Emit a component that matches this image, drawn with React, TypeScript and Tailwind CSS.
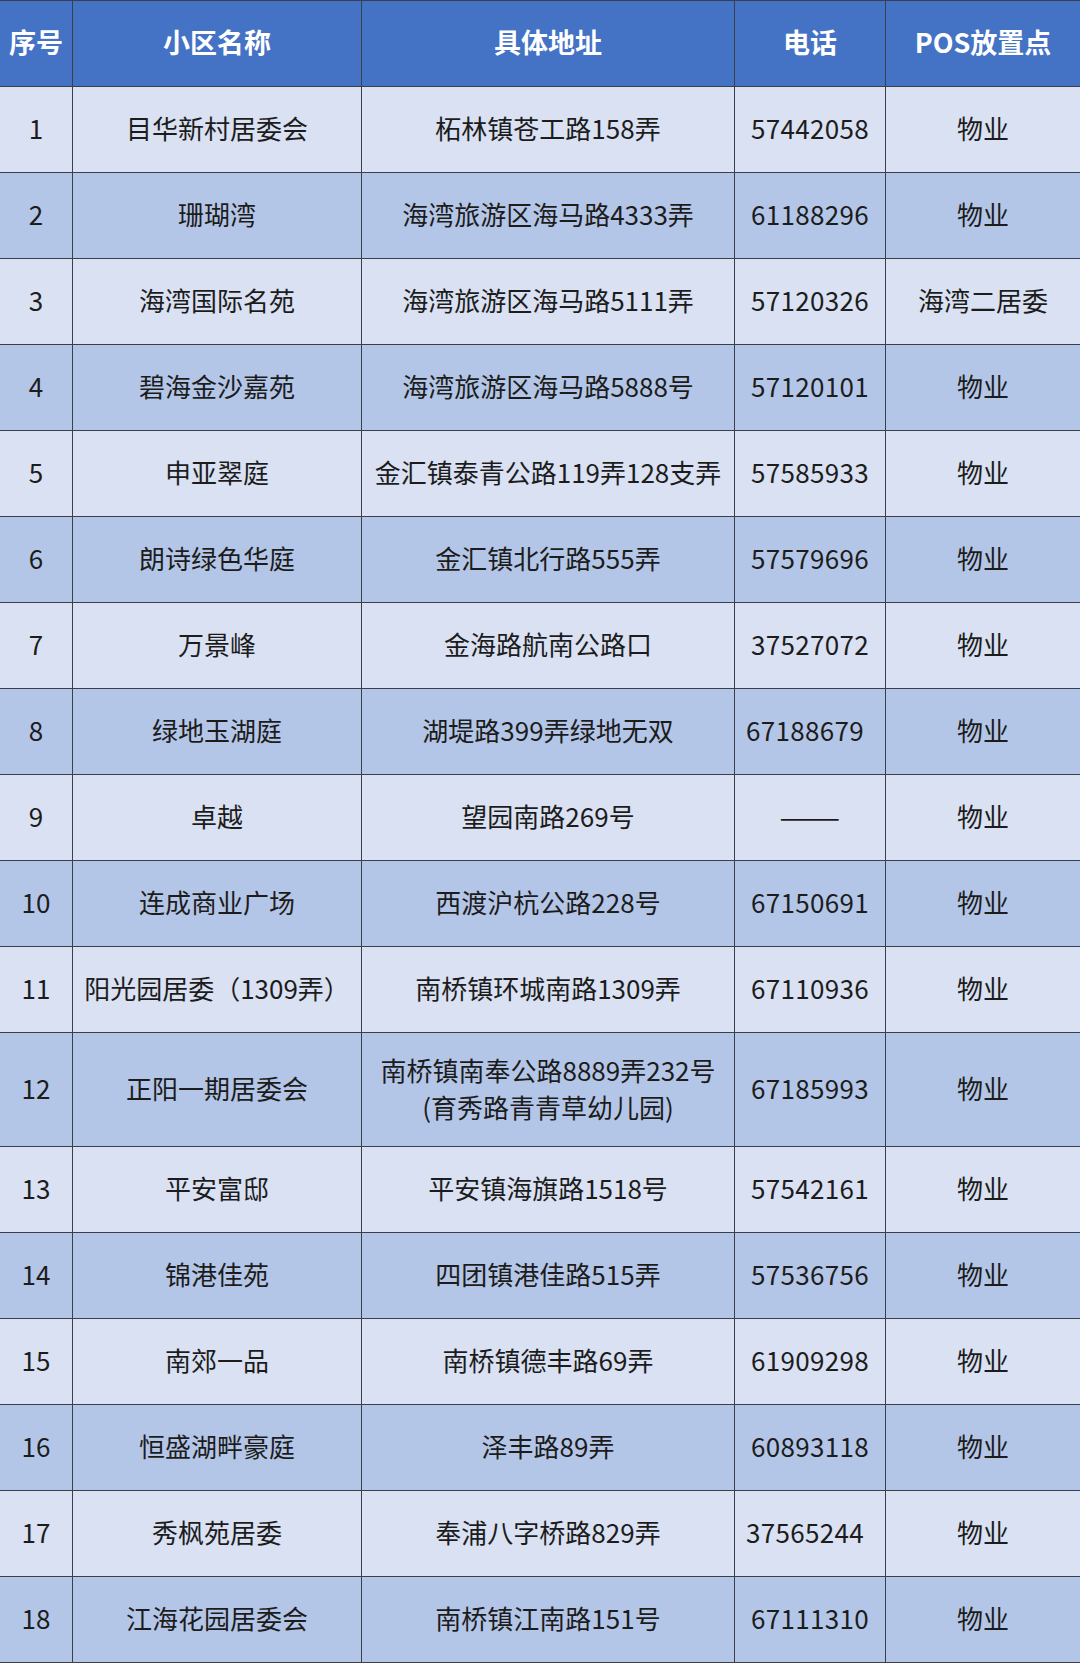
const rows: [string, string, string[], string, string, string?][] = [
  ['1', '目华新村居委会', ['柘林镇苍工路158弄'], '57442058', '物业'],
  ['2', '珊瑚湾', ['海湾旅游区海马路4333弄'], '61188296', '物业'],
  ['3', '海湾国际名苑', ['海湾旅游区海马路5111弄'], '57120326', '海湾二居委'],
  ['4', '碧海金沙嘉苑', ['海湾旅游区海马路5888号'], '57120101', '物业'],
  ['5', '申亚翠庭', ['金汇镇泰青公路119弄128支弄'], '57585933', '物业'],
  ['6', '朗诗绿色华庭', ['金汇镇北行路555弄'], '57579696', '物业'],
  ['7', '万景峰', ['金海路航南公路口'], '37527072', '物业'],
  ['8', '绿地玉湖庭', ['湖堤路399弄绿地无双'], '67188679', '物业', 'left'],
  ['9', '卓越', ['望园南路269号'], '——', '物业'],
  ['10', '连成商业广场', ['西渡沪杭公路228号'], '67150691', '物业'],
  ['11', '阳光园居委（1309弄）', ['南桥镇环城南路1309弄'], '67110936', '物业'],
  ['12', '正阳一期居委会', ['南桥镇南奉公路8889弄232号', '(育秀路青青草幼儿园)'], '67185993', '物业'],
  ['13', '平安富邸', ['平安镇海旗路1518号'], '57542161', '物业'],
  ['14', '锦港佳苑', ['四团镇港佳路515弄'], '57536756', '物业'],
  ['15', '南郊一品', ['南桥镇德丰路69弄'], '61909298', '物业'],
  ['16', '恒盛湖畔豪庭', ['泽丰路89弄'], '60893118', '物业'],
  ['17', '秀枫苑居委', ['奉浦八字桥路829弄'], '37565244', '物业', 'left'],
  ['18', '江海花园居委会', ['南桥镇江南路151号'], '67111310', '物业'],
];

const headers = ['序号', '小区名称', '具体地址', '电话', 'POS放置点'];

export default function App() {
  return (
    <div
      className="w-[1080px] bg-white"
      style={{ fontFamily: '"Noto Sans CJK SC", "Noto Sans", sans-serif' }}
    >
      <div className="grid grid-cols-[73px_289px_373px_151px_194px] border-t border-[#3a3f4b]">
        {headers.map((h, i) => (
          <div
            key={h}
            className={`flex h-[86px] items-center justify-center border-b border-[#3a3f4b] bg-[#4472c4] pb-[2px] text-[27px] font-bold text-white ${
              i < 4 ? 'border-r' : ''
            }`}
          >
            {h}
          </div>
        ))}
        {rows.map(([no, name, addr, phone, pos, align], idx) => {
          const bg = idx % 2 === 0 ? 'bg-[#d9e1f2]' : 'bg-[#b4c6e7]';
          const h = addr.length > 1 ? 'h-[114px]' : 'h-[86px]';
          const cell = `flex ${h} items-center justify-center border-b border-[#3a3f4b] ${bg} pb-[4px] text-[26px] text-[#1c1c1c]`;
          return (
            <div key={no} className="contents">
              <div className={`${cell} border-r`}>{no}</div>
              <div className={`${cell} border-r`}>{name}</div>
              <div className={`${cell} border-r flex-col leading-[37px]`}>
                {addr.map((a) => (
                  <span key={a}>{a}</span>
                ))}
              </div>
              <div className={`${cell} border-r ${align === 'left' ? 'pr-[10px]' : ''}`}>
                {phone === '——' ? (
                  <span className="scale-x-[1.4]">{phone}</span>
                ) : (
                  <span className="tracking-[0.3px]">{phone}</span>
                )}
              </div>
              <div className={cell}>{pos}</div>
            </div>
          );
        })}
      </div>
    </div>
  );
}
